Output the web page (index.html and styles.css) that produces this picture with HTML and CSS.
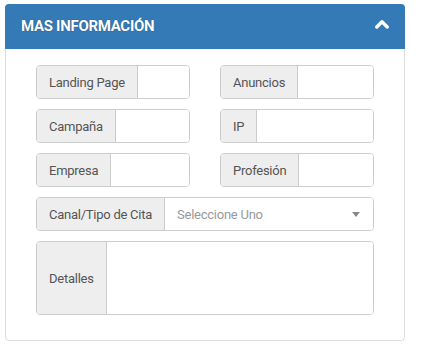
FILE: index.html
```html
<!DOCTYPE html>
<html lang="es">
<head>
<meta charset="utf-8">
<title>Mas información</title>
<link rel="stylesheet" href="styles.css">
</head>
<body>
<div class="panel">
  <div class="panel-heading">
    <h3 class="panel-title">MAS INFORMACIÓN</h3>
    <svg class="chevron" width="14" height="10" viewBox="0 0 14 10"><path d="M1.8 8 L7 2.8 L12.2 8" fill="none" stroke="#fff" stroke-width="3.4" stroke-linecap="round" stroke-linejoin="round"/></svg>
  </div>
  <div class="panel-body">
    <div class="grid">
      <div class="input-group"><span class="addon">Landing Page</span><span class="control"></span></div>
      <div class="input-group"><span class="addon">Anuncios</span><span class="control"></span></div>
      <div class="input-group"><span class="addon">Campaña</span><span class="control"></span></div>
      <div class="input-group"><span class="addon">IP</span><span class="control"></span></div>
      <div class="input-group"><span class="addon">Empresa</span><span class="control"></span></div>
      <div class="input-group"><span class="addon">Profesión</span><span class="control"></span></div>
      <div class="input-group wide"><span class="addon">Canal/Tipo de Cita</span><span class="control select"><span class="placeholder">Seleccione Uno</span><span class="caret"></span></span></div>
      <div class="input-group wide tall"><span class="addon">Detalles</span><span class="control"></span></div>
    </div>
  </div>
</div>
</body>
</html>
```
FILE: styles.css
```css
* { box-sizing: border-box; }
html, body { margin: 0; padding: 0; background: #fff; }
body {
  font-family: Roboto, "Liberation Sans", sans-serif;
  padding: 4px 17px 0 5px;
}
.panel {
  border: 1px solid #ddd;
  border-radius: 4px;
  height: 337px;
  background: #fff;
}
.panel-heading {
  background: #337ab7;
  height: 45px;
  margin: -1px -1px 0 -1px;
  border-radius: 4px 4px 0 0;
  display: flex;
  align-items: center;
  justify-content: space-between;
  padding: 0 16px 0 16px;
}
.panel-title {
  margin: 0;
  color: #fff;
  font-size: 15px;
  font-weight: 700;
  letter-spacing: -0.3px;
  text-shadow: 0 0 1px rgba(0,0,0,0.5);
  transform: translateY(-1px);
}
.chevron { display: block; margin-top: -5px; margin-right: 0; }
.panel-body {
  padding: 16px 30px 0 30px;
}
.grid {
  display: grid;
  grid-template-columns: 1fr 1fr;
  column-gap: 30px;
  row-gap: 10px;
}
.input-group {
  display: flex;
  height: 34px;
  border: 1px solid #ccc;
  border-radius: 4px;
  overflow: hidden;
  font-size: 13px;
  color: #555;
}
.input-group.wide { grid-column: 1 / 3; }
.input-group.tall { height: 74px; }
.addon {
  background: #eee;
  border-right: 1px solid #ccc;
  padding: 0 12px;
  display: flex;
  align-items: center;
  white-space: nowrap;
  letter-spacing: -0.25px;
}
.control {
  flex: 1;
  background: #fff;
  display: flex;
  align-items: center;
}
.select { padding: 0 12px; justify-content: space-between; }
.placeholder { color: #999; letter-spacing: -0.25px; }
.caret {
  width: 0; height: 0;
  border-left: 4px solid transparent;
  border-right: 4px solid transparent;
  border-top: 5px solid #888;
  margin-right: 1px;
}
```
